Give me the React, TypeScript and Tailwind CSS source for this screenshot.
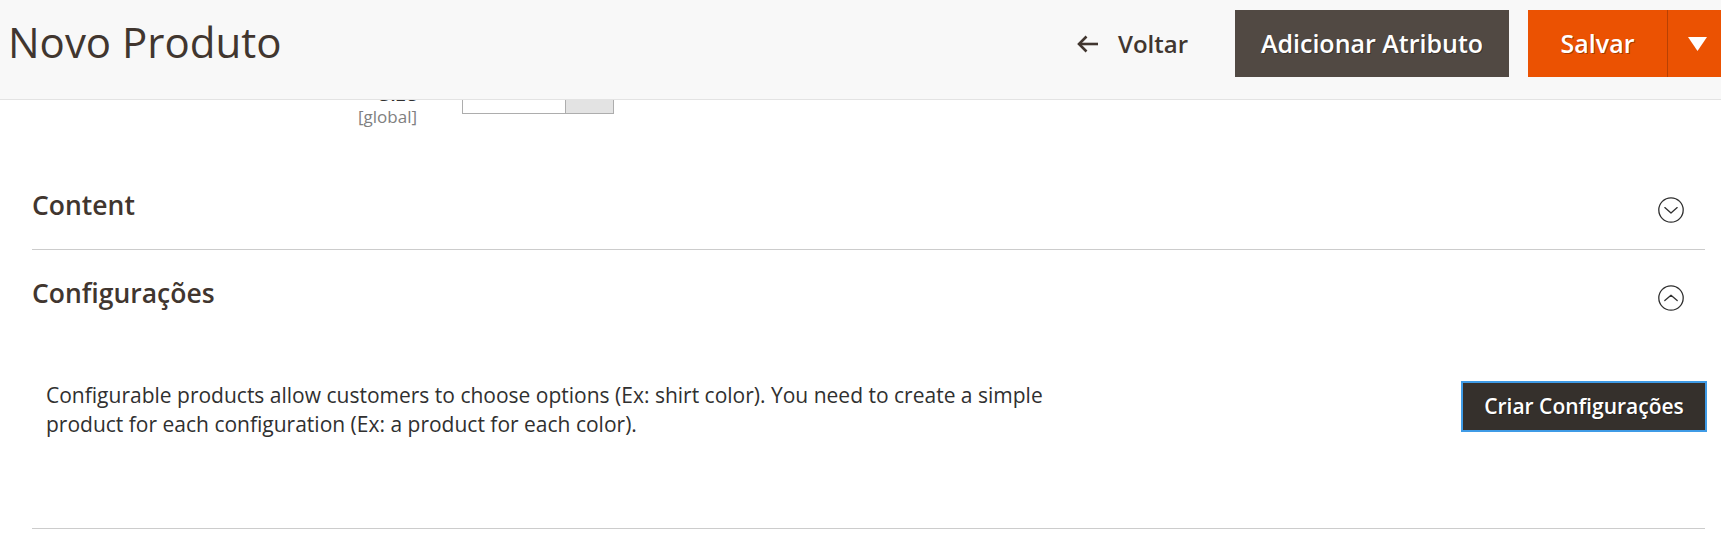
import React from 'react';

function Chevron({ up }: { up?: boolean }) {
  return (
    <svg width="26" height="26" viewBox="0 0 26 26" className="mr-[21px] mt-[10px] shrink-0" fill="none" stroke="#303030" strokeWidth="1.3">
      <circle cx="13" cy="13" r="12.2" />
      {up ? (
        <polyline points="6.8,15.6 13,10.2 19.2,15.6" strokeLinecap="round" strokeLinejoin="round" />
      ) : (
        <polyline points="6.8,10.6 13,16 19.2,10.6" strokeLinecap="round" strokeLinejoin="round" />
      )}
    </svg>
  );
}

export default function App() {
  return (
    <div className="h-[538px] w-full overflow-hidden bg-white font-['Open_Sans',sans-serif] text-[#303030]">
      <header className="relative z-10 flex h-[100px] items-start border-b border-[#e3e3e3] bg-[#f8f8f8] pl-2">
        <h1 className="mt-[17px] text-[42px] font-normal leading-[50px] text-[#41362f]">Novo Produto</h1>

        <div className="-mr-[5px] ml-auto mt-[10px] flex h-[67px] shrink-0 items-center">
          <button className="mr-[47px] flex items-center gap-[20px] text-[24px] font-semibold text-[#41362f]">
            <svg width="21" height="18" viewBox="0 0 21 18" fill="none" stroke="#41362f" strokeWidth="2.6">
              <line x1="2" y1="9" x2="21" y2="9" />
              <polyline points="9.5,1.5 2,9 9.5,16.5" />
            </svg>
            Voltar
          </button>

          <button className="h-full w-[274px] bg-[#514943] text-[25px] font-semibold text-white [text-shadow:1px_1px_0_rgba(0,0,0,0.3)]">
            Adicionar Atributo
          </button>

          <div className="ml-[19px] flex h-full bg-[#eb5202]">
            <button className="w-[139px] text-[25px] font-semibold text-white [text-shadow:1px_1px_0_rgba(0,0,0,0.3)]">
              Salvar
            </button>
            <button className="flex w-[59px] items-center justify-center border-l border-[#b84103]">
              <svg width="19" height="14" viewBox="0 0 19 14">
                <polygon points="0,0 19,0 9.5,14" fill="#fff" />
              </svg>
            </button>
          </div>
        </div>
      </header>

      <main className="overflow-hidden pl-8 pr-4">
        {/* field row scrolled under the sticky header */}
        <div className="-mt-[19px] flex items-start">
          <div className="w-[385px] text-right">
            <div className="text-[20px] font-semibold leading-[26px]">Size</div>
            <div className="text-[17px] leading-[20px] text-[#808080]">[global]</div>
          </div>
          <div className="ml-[45px] flex h-[33px]">
            <div className="w-[104px] border border-[#adadad] bg-white" />
            <div className="w-[48px] border border-l-0 border-[#adadad] bg-[#e3e3e3]" />
          </div>
        </div>

        <section className="flex items-start justify-between border-b border-[#cccccc] pb-[26px] pt-[60px]">
          <h2 className="text-[26.5px] font-semibold leading-[36px] text-[#41362f]">Content</h2>
          <Chevron />
        </section>

        <section className="border-b border-[#cccccc] pb-[89px]">
          <div className="flex items-start justify-between pt-[25px]">
            <h2 className="text-[26.5px] font-semibold leading-[36px] text-[#41362f]">Configurações</h2>
            <Chevron up />
          </div>

          <div className="mt-[70px] flex items-start justify-between pl-[14px]">
            <p className="w-[1030px] text-[21px] leading-[29px] text-[#303030]">
              Configurable products allow customers to choose options (Ex: shirt color). You need to create a simple
              product for each configuration (Ex: a product for each color).
            </p>
            <button className="-mr-[2px] h-[51px] w-[246px] border-2 border-[#3f9be6] bg-[#35302c] text-[21px] font-semibold text-white [text-shadow:1px_1px_0_rgba(0,0,0,0.3)]">
              Criar Configurações
            </button>
          </div>
        </section>
      </main>
    </div>
  );
}
